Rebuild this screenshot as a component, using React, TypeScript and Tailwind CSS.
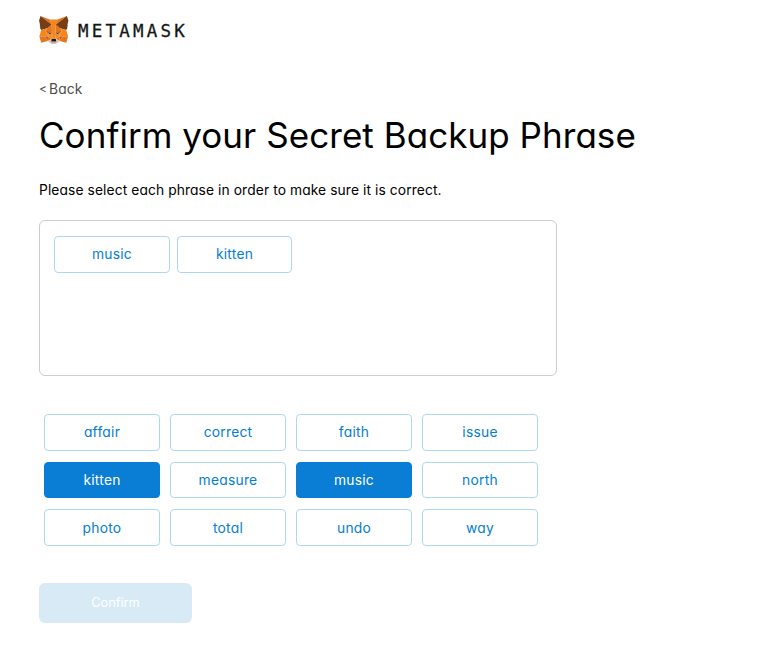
import React from "react";
import { clsx } from "clsx";

const fox: [string, string][] = [
  ["#E2761B", "274.1,35.5 174.6,109.4 193,65.8"],
  ["#E4761B", "44.4,35.5 143.1,110.1 125.6,65.8"],
  ["#E4761B", "238.3,206.8 211.8,247.4 268.5,263 284.8,207.7"],
  ["#E4761B", "33.9,207.7 50.1,263 106.8,247.4 80.3,206.8"],
  ["#E4761B", "103.6,138.2 87.8,162.1 144.1,164.6 142.1,104.1"],
  ["#E4761B", "214.9,138.2 175.9,103.4 174.6,164.6 230.8,162.1"],
  ["#E4761B", "106.8,247.4 140.6,230.9 111.4,208.1"],
  ["#E4761B", "177.9,230.9 211.8,247.4 207.1,208.1"],
  ["#D7C1B3", "211.8,247.4 177.9,230.9 180.6,253 180.3,262.3"],
  ["#D7C1B3", "106.8,247.4 138.3,262.3 138.1,253 140.6,230.9"],
  ["#233447", "138.8,193.5 110.6,185.2 130.5,176.1"],
  ["#233447", "179.7,193.5 188,176.1 208,185.2"],
  ["#CD6116", "106.8,247.4 111.6,206.8 80.3,207.7"],
  ["#CD6116", "207,206.8 211.8,247.4 238.3,207.7"],
  ["#CD6116", "230.8,162.1 174.6,164.6 179.8,193.5 188.1,176.1 208.1,185.2"],
  ["#CD6116", "110.6,185.2 130.6,176.1 138.8,193.5 144.1,164.6 87.8,162.1"],
  ["#E4751F", "87.8,162.1 111.4,208.1 110.6,185.2"],
  ["#E4751F", "208.1,185.2 207.1,208.1 230.8,162.1"],
  ["#E4751F", "144.1,164.6 138.8,193.5 145.4,227.6 146.9,182.7"],
  ["#E4751F", "174.6,164.6 171.9,182.6 173.1,227.6 179.8,193.5"],
  ["#F6851B", "179.8,193.5 173.1,227.6 177.9,230.9 207.1,208.1 208.1,185.2"],
  ["#F6851B", "110.6,185.2 111.4,208.1 140.6,230.9 145.4,227.6 138.8,193.5"],
  ["#C0AD9E", "180.3,262.3 180.6,253 178.1,250.8 140.4,250.8 138.1,253 138.3,262.3 106.8,247.4 117.8,256.4 140.1,271.9 178.4,271.9 200.8,256.4 211.8,247.4"],
  ["#161616", "177.9,230.9 173.1,227.6 145.4,227.6 140.6,230.9 138.1,253 140.4,250.8 178.1,250.8 180.6,253"],
  ["#763D16", "278.3,114.2 286.8,73.4 274.1,35.5 177.9,106.9 214.9,138.2 267.2,153.5 278.8,140 273.8,136.4 281.8,129.1 275.6,124.3 283.6,118.2"],
  ["#763D16", "31.8,73.4 40.3,114.2 34.9,118.2 42.9,124.3 36.8,129.1 44.8,136.4 39.8,140 51.3,153.5 103.6,138.2 140.6,106.9 44.4,35.5"],
  ["#F6851B", "267.2,153.5 214.9,138.2 230.8,162.1 207.1,208.1 238.3,207.7 284.8,207.7"],
  ["#F6851B", "103.6,138.2 51.3,153.5 33.9,207.7 80.3,207.7 111.4,208.1 87.8,162.1"],
  ["#F6851B", "174.6,164.6 177.9,106.9 193.1,65.8 125.6,65.8 140.6,106.9 144.1,164.6 145.3,182.5 145.4,227.6 173.1,227.6 173.3,182.5"],
];

function Logo() {
  return (
    <div className="flex h-7 items-center">
      <svg className="h-[28px] w-[29.5px]" viewBox="31 35 257 238" preserveAspectRatio="none">
        {fox.map(([fill, points], i) => (
          <polygon key={i} fill={fill} points={points} />
        ))}
      </svg>
      <span className="ml-[9.5px] pt-[2px] font-['DejaVu_Sans_Mono',monospace] text-[17.5px] leading-7 tracking-[3.2px] text-[#161616] [-webkit-text-stroke:0.3px_#161616]">
        METAMASK
      </span>
    </div>
  );
}

function Word({ label, selected = false, className }: { label: string; selected?: boolean; className?: string }) {
  return (
    <button
      className={clsx(
        "flex items-center justify-center rounded border text-[13.8px] leading-5 tracking-[0.25px]",
        selected ? "border-[#0a7dd4] bg-[#0a7dd4] text-white" : "border-[#b0d7f2] bg-white text-[#037dd6]",
        className,
      )}
    >
      {label}
    </button>
  );
}

const words = ["affair", "correct", "faith", "issue", "kitten", "measure", "music", "north", "photo", "total", "undo", "way"];
const chosen = ["music", "kitten"];

export default function App() {
  return (
    <main className="flex h-[659px] flex-col items-start bg-white pl-[39px] pt-4 font-['Inter','Liberation_Sans',sans-serif] text-black [font-feature-settings:'cv11']">
      <Logo />
      <a className="mt-[35px] flex items-center gap-[2px] text-[13.8px] leading-5 tracking-[0.15px] text-[#4d4d4d]">
        <span className="w-[8px] text-[12px]">&lt;</span>
        <span>Back</span>
      </a>
      <h1 className="mt-[14px] whitespace-nowrap text-[35px] font-normal leading-11 tracking-[0.05px]">Confirm your Secret Backup Phrase</h1>
      <p className="mt-[23px] whitespace-nowrap text-[13.8px] leading-5 tracking-[0.1px]">Please select each phrase in order to make sure it is correct.</p>
      <section className="mt-5 flex h-[156px] w-[518px] items-start gap-[7px] rounded-md border border-[#cdcdcd] pl-[14px] pt-[15px]">
        <Word label={chosen[0]} className="h-[37px] w-[116px] pb-px" />
        <Word label={chosen[1]} className="h-[37px] w-[115px] pb-px" />
      </section>
      <section className="ml-[5px] mt-[38px] grid grid-cols-[repeat(4,116px)] grid-rows-[37px_36px_37px] gap-x-[10px] gap-y-[11px]">
        {words.map((word, i) => (
          <Word key={word} label={word} selected={chosen.includes(word)} className={i < 4 ? "pb-px" : undefined} />
        ))}
      </section>
      <button className="mt-[37px] flex h-10 w-[153px] items-center justify-center rounded-md bg-[#d7eaf6] pb-px text-[12.8px] leading-5 text-white">
        Confirm
      </button>
    </main>
  );
}
